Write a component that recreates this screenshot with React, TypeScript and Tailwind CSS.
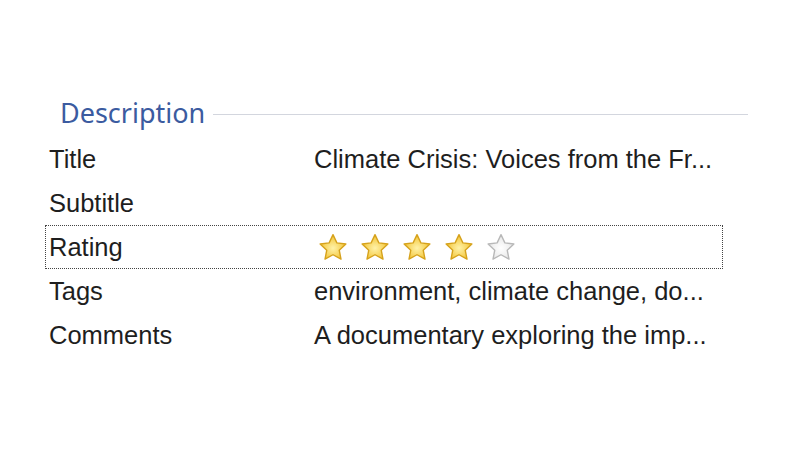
const rows = [
  { label: 'Title', value: 'Climate Crisis: Voices from the Fr...' },
  { label: 'Subtitle', value: '' },
  { label: 'Rating', value: null },
  { label: 'Tags', value: 'environment, climate change, do...' },
  { label: 'Comments', value: 'A documentary exploring the imp...' },
];

function StarIcon({ filled }: { filled: boolean }) {
  return (
    <svg width="30" height="29" viewBox="0 0 24 23">
      <defs>
        <radialGradient id={filled ? 'gold' : 'grey'} cx="50%" cy="55%" r="55%">
          <stop offset="0%" stopColor={filled ? '#fff2a8' : '#ffffff'} />
          <stop offset="100%" stopColor={filled ? '#f2c230' : '#e6e6e6'} />
        </radialGradient>
      </defs>
      <path
        d="M12 1.2l3.1 6.6 7.2.9-5.3 5 1.4 7.1L12 17.3l-6.4 3.5L7 13.7 1.7 8.7l7.2-.9z"
        fill={filled ? 'url(#gold)' : 'url(#grey)'}
        stroke={filled ? '#d6a21c' : '#b8b8b8'}
        strokeWidth="1.1"
        strokeLinejoin="round"
      />
    </svg>
  );
}

function Stars({ count }: { count: number }) {
  return (
    <div className="flex items-center gap-[12px] pl-[4px]">
      {[0, 1, 2, 3, 4].map((i) => (
        <StarIcon key={i} filled={i < count} />
      ))}
    </div>
  );
}

export default function App() {
  return (
    <div className="w-[800px] h-[450px] bg-white pt-[96px] pl-[45px] font-['Liberation_Sans',Arial,sans-serif]">
      <div className="flex items-center w-[703px]">
        <span className="pl-[15px] pr-[8px] text-[27px] leading-[34px] text-[#3b5ba0] font-['Noto_Sans',sans-serif]">
          Description
        </span>
        <div className="flex-1 h-px bg-[#d3d6de] mt-[2px]" />
      </div>
      <div className="mt-[7px] w-[678px]">
        {rows.map((row) => (
          <div
            key={row.label}
            className={
              'flex items-center h-[44px] text-[25.5px] text-[#1e1e1e] ' +
              (row.value === null ? 'border border-dotted border-[#444]' : 'border border-transparent')
            }
          >
            <span className="w-[268px] pl-[3px]">{row.label}</span>
            {row.value === null ? <Stars count={4} /> : <span>{row.value}</span>}
          </div>
        ))}
      </div>
    </div>
  );
}
